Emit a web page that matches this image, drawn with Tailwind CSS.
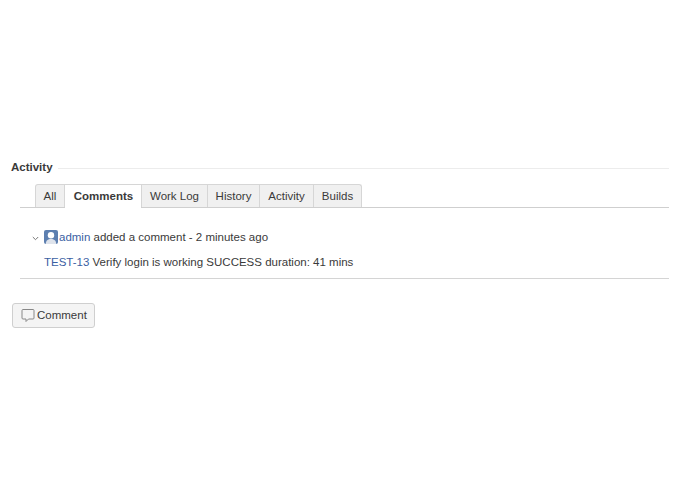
<!DOCTYPE html>
<html lang="en">
<head>
  <meta charset="UTF-8" />
  <title>Activity</title>
  <script src="https://cdn.jsdelivr.net/npm/@tailwindcss/browser@4"></script>
</head>
<body class="bg-white w-[695px] h-[494px] overflow-hidden font-['Liberation_Sans',Arial,sans-serif] text-[11.5px] text-[#3a3a3a]">
  <div class="pt-[160px] pl-[12px] pr-[26px]">
    <!-- Module heading -->
    <div class="flex items-center h-[16px]">
      <h2 class="font-bold text-[11.5px] leading-[16px] pr-[5px] -ml-px mb-[2px]">Activity</h2>
      <div class="flex-1 h-px bg-[#ececec]"></div>
    </div>

    <!-- Tabs -->
    <div class="ml-[8px] mt-[8px] pl-[15px] h-[23px] flex border-b border-[#cfcfcf] box-content">
      <div class="w-[30px] h-[23px] text-center leading-[23px] bg-[#f0f0f0] border border-b-0 border-[#d6d6d6] rounded-tl-[3px]">All</div>
      <div class="w-[76px] h-[24px] text-center leading-[23px] pl-px bg-white font-bold border-t border-[#d6d6d6]">Comments</div>
      <div class="w-[67px] h-[23px] text-center leading-[23px] bg-[#f0f0f0] border border-b-0 border-[#d6d6d6]">Work Log</div>
      <div class="w-[52px] h-[23px] text-center leading-[23px] bg-[#f0f0f0] border border-b-0 border-l-0 border-[#d6d6d6]">History</div>
      <div class="w-[54px] h-[23px] text-center leading-[23px] bg-[#f0f0f0] border border-b-0 border-l-0 border-[#d6d6d6]">Activity</div>
      <div class="w-[48px] h-[23px] text-center leading-[23px] bg-[#f0f0f0] border border-b-0 border-l-0 border-[#d6d6d6] rounded-tr-[3px]">Builds</div>
    </div>

    <!-- Comment -->
    <div class="ml-[8px] border-b border-[#d4d4d4] h-[71px] pt-[21px]">
      <div class="flex items-center h-[16px] pl-[12px]">
        <svg class="w-[7px] h-[5px] mr-[5px] mt-[3px]" viewBox="0 0 7 5" fill="none" stroke="#777" stroke-width="1"><path d="M.8 1l2.700 2.700L6.200 1"/></svg>
        <svg class="w-[14px] h-[14px] mr-[1px]" viewBox="0 0 14 14"><rect width="14" height="14" rx="2" fill="#5d7fb0"/><circle cx="7" cy="5.300" r="3.200" fill="#fff"/><path d="M1.800 14c0-3.600 2.200-5 5.200-5s5.200 1.400 5.200 5z" fill="#dfe4ec"/></svg>
        <p class="leading-[16px]"><a class="text-[#3b5fa3]">admin</a> added a comment - 2 minutes ago</p>
      </div>
      <p class="ml-[24px] mt-[9px] leading-[16px]"><a class="text-[#3b5fa3]">TEST-13</a> Verify login is working SUCCESS duration: 41 mins</p>
    </div>

    <!-- Comment button -->
    <button class="mt-[24px] h-[25px] w-[83px] flex items-center pl-[8px] bg-[#f4f4f4] border border-[#cfcfcf] rounded-[3px] text-[#3a3a3a] text-[11.5px]">
      <svg class="w-[14px] h-[15px] mr-[2px]" viewBox="0 0 14 15" fill="none" stroke="#888" stroke-width="1"><path d="M2 1.500h10a1 1 0 0 1 1 1v7.500a1 1 0 0 1-1 1H7.500L5 13.500V11H2a1 1 0 0 1-1-1V2.500a1 1 0 0 1 1-1z"/></svg>
      Comment
    </button>
  </div>
</body>
</html>
